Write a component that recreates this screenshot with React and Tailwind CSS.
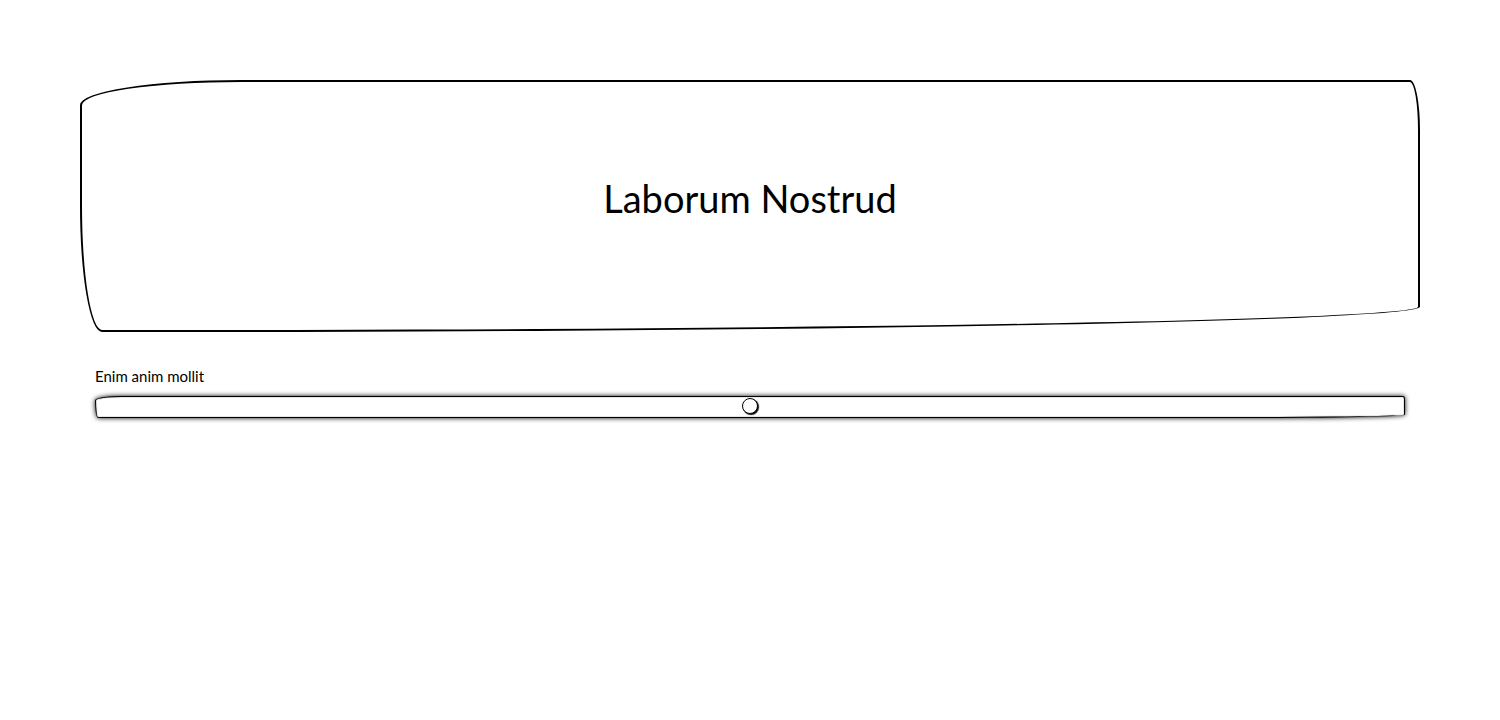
const heroShape =
  "rounded-[12%_10px_93%_22px/10%_20%_10%_50%]";

const trackShape =
  "rounded-[2%_2px_12%_3px/20%_3px_15%_80%]";

const thumb =
  "[&::-webkit-slider-thumb]:appearance-none [&::-webkit-slider-thumb]:size-4 [&::-webkit-slider-thumb]:rounded-full [&::-webkit-slider-thumb]:border [&::-webkit-slider-thumb]:border-solid [&::-webkit-slider-thumb]:border-black [&::-webkit-slider-thumb]:bg-white [&::-webkit-slider-thumb]:shadow-[1px_1px_1px_#000]";

export default function App() {
  return (
    <main className="p-20 font-['Lato','Liberation_Sans',sans-serif] text-black">
      <header
        className={`flex items-center justify-center border-2 border-black px-6 pt-22 pb-26 ${heroShape}`}
      >
        <h1 className="text-[38px] leading-14">Laborum Nostrud</h1>
      </header>
      <section className="flex flex-col gap-2 px-[15px] pt-8">
        <label htmlFor="amount" className="text-[15px] leading-6">
          Enim anim mollit
        </label>
        <input
          id="amount"
          type="range"
          min="0"
          max="100"
          defaultValue="50"
          className={`h-[22px] w-full appearance-none border border-black bg-white pb-0.5 shadow-[0_0_5px_#000,inset_0_0_1px_#000] ${trackShape} ${thumb}`}
        />
      </section>
    </main>
  );
}
